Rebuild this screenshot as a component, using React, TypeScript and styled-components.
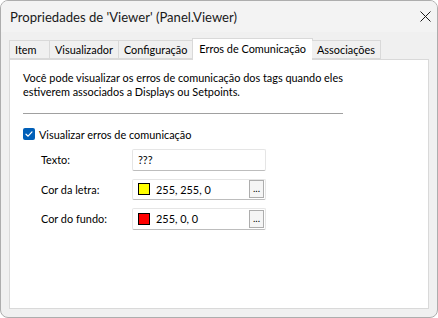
import styled, { createGlobalStyle } from "styled-components";

const GlobalStyle = createGlobalStyle`
  html, body {
    margin: 0;
    padding: 0;
    background: #ffffff;
  }
  body {
    font-family: Lato, "Noto Sans", "Liberation Sans", sans-serif;
    font-size: 10.9px;
    color: #000000;
  }
`;

const tabs = ["Item", "Visualizador", "Configuração", "Erros de Comunicação", "Associações"];
const activeTab = 3;

const CheckIcon = () => (
  <svg width="10" height="10" viewBox="0 0 10 10">
    <path d="M2 5.2 L4.1 7.2 L8 2.9" fill="none" stroke="#fff" strokeWidth="1.2" strokeLinecap="round" strokeLinejoin="round" />
  </svg>
);

const CloseIcon = () => (
  <svg width="11" height="11" viewBox="0 0 11 11">
    <path d="M0.5 0.5 L10.5 10.5 M10.5 0.5 L0.5 10.5" stroke="#1a1a1a" strokeWidth="1" />
  </svg>
);

export default function App() {
  return (
    <>
      <GlobalStyle />
      <Window>
        <TitleBar>
          <Title>Propriedades de 'Viewer' (Panel.Viewer)</Title>
          <CloseButton>
            <CloseIcon />
          </CloseButton>
        </TitleBar>
        <Body>
          <TabStrip>
            {tabs.map((t, i) => (
              <Tab key={t} $active={i === activeTab}>
                {t}
              </Tab>
            ))}
          </TabStrip>
          <Panel>
            <Description>
              Você pode visualizar os erros de comunicação dos tags quando eles
              <br />
              estiverem associados a Displays ou Setpoints.
            </Description>
            <Separator />
            <CheckRow>
              <CheckBox>
                <CheckIcon />
              </CheckBox>
              <span>Visualizar erros de comunicação</span>
            </CheckRow>
            <Fields>
              <FieldLabel>Texto:</FieldLabel>
              <Input>???</Input>
              <FieldLabel>Cor da letra:</FieldLabel>
              <Input>
                <Swatch $color="#ffff00" />
                <ColorText>255, 255, 0</ColorText>
                <DotsButton>...</DotsButton>
              </Input>
              <FieldLabel>Cor do fundo:</FieldLabel>
              <Input>
                <Swatch $color="#ff0000" />
                <ColorText>255, 0, 0</ColorText>
                <DotsButton>...</DotsButton>
              </Input>
            </Fields>
          </Panel>
        </Body>
      </Window>
    </>
  );
}

const Window = styled.div`
  width: 438px;
  height: 318px;
  box-sizing: border-box;
  border: 1px solid #adadad;
  border-radius: 8px;
  background: #f0f0f0;
  display: flex;
  flex-direction: column;
  overflow: hidden;
`;

const TitleBar = styled.div`
  height: 31px;
  display: flex;
  align-items: center;
  justify-content: space-between;
  padding: 0 2px 0 9px;
  background: #f3f3f3;
`;

const Title = styled.div`
  font-size: 13.1px;
  color: #1a1a1a;
`;

const CloseButton = styled.div`
  width: 20px;
  height: 20px;
  display: flex;
  align-items: center;
  justify-content: center;
`;

const Body = styled.div`
  flex: 1;
  display: flex;
  flex-direction: column;
  padding: 6px 8px 8px 8px;
`;

const TabStrip = styled.div`
  display: flex;
  align-items: flex-end;
  height: 21px;
  position: relative;
  z-index: 1;
`;

const Tab = styled.div<{ $active: boolean }>`
  box-sizing: border-box;
  min-width: 41px;
  height: ${({ $active }) => ($active ? "22px" : "19px")};
  padding: ${({ $active }) => ($active ? "0 6px 3px 6px" : "0 5px")};
  margin: ${({ $active }) => ($active ? "0 -1px -1px -1px" : "0")};
  display: flex;
  align-items: center;
  border: 1px solid #d9d9d9;
  border-bottom: ${({ $active }) => ($active ? "none" : "1px solid #d9d9d9")};
  border-left: ${({ $active }) => ($active ? "1px solid #d9d9d9" : "none")};
  background: ${({ $active }) => ($active ? "#ffffff" : "#f0f0f0")};
  &:first-child {
    border-left: 1px solid #d9d9d9;
    padding-left: 5px;
  }
`;

const Panel = styled.div`
  flex: 1;
  background: #ffffff;
  border: 1px solid #d9d9d9;
  padding: 11px 13px;
`;

const Description = styled.div`
  line-height: 14px;
`;

const Separator = styled.div`
  width: 320px;
  height: 1px;
  background: #a0a0a0;
  margin: 14px 0 13px 0;
`;

const CheckRow = styled.div`
  display: flex;
  align-items: center;
  gap: 4px;
  height: 14px;
`;

const CheckBox = styled.div`
  width: 12px;
  height: 12px;
  border-radius: 2px;
  background: #005fb8;
  display: flex;
  align-items: center;
  justify-content: center;
`;

const Fields = styled.div`
  display: grid;
  grid-template-columns: 91px 134px;
  grid-auto-rows: 21.5px;
  row-gap: 8px;
  align-items: center;
  margin: 8px 0 0 18px;
`;

const FieldLabel = styled.div``;

const Input = styled.div`
  box-sizing: border-box;
  height: 100%;
  display: flex;
  align-items: center;
  padding: 0 1px 0 5px;
  border: 1px solid #e5e5e5;
  border-bottom-color: #bdbdbd;
  border-radius: 2px;
  background: #ffffff;
`;

const Swatch = styled.div<{ $color: string }>`
  width: 10px;
  height: 10px;
  border: 1px solid #000000;
  background: ${({ $color }) => $color};
  margin-right: 6px;
`;

const ColorText = styled.span`
  flex: 1;
`;

const DotsButton = styled.div`
  box-sizing: border-box;
  width: 15px;
  height: 18px;
  border: 1px solid #adadad;
  background: #f5f5f5;
  font-size: 10px;
  line-height: 12px;
  display: flex;
  align-items: flex-end;
  justify-content: center;
  padding-bottom: 3px;
`;
